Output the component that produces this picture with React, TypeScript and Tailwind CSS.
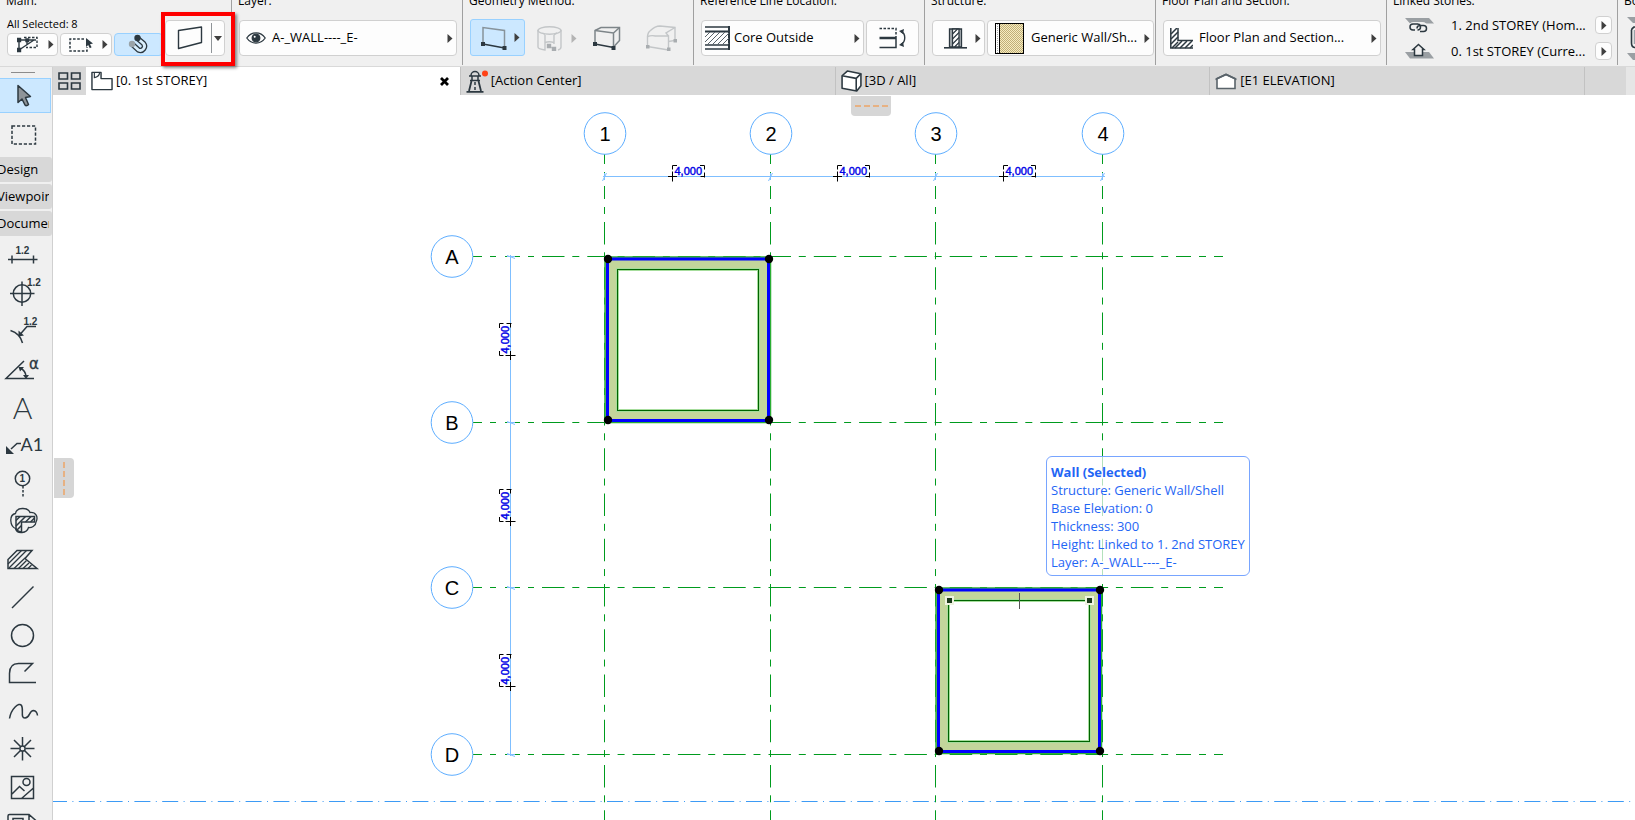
import React, { useState } from "react";

const INK = "#2c3840";

/* ---------- shared bits ---------- */

const Caret: React.FC<{ color?: string }> = ({ color = "#3f3f3f" }) => (
  <svg width="6" height="9" viewBox="0 0 6 9" className="shrink-0" aria-hidden="true">
    <path d="M0.5 0v9L5.5 4.5z" fill={color} />
  </svg>
);

const boxed = "flex shrink-0 items-center rounded border border-[#d0d0d0] bg-[#fdfdfd]";

const Section: React.FC<{ title: string; wide?: boolean; children: React.ReactNode }> = ({
  title,
  wide,
  children,
}) => (
  <section
    className={`flex h-[65px] shrink-0 flex-col overflow-hidden border-r border-[#a0a0a0] ${
      wide ? "w-[232px]" : "w-[231px]"
    }`}
  >
    <h2 className="-mt-[7px] pl-[6px] text-[12px] leading-4 whitespace-nowrap">{title}</h2>
    <div className="flex h-[47px] items-end gap-[2px] pl-[7px] pr-[5px]">{children}</div>
  </section>
);

/* ---------- info box icons ---------- */

const GroupIcon = () => (
  <svg width="22" height="17" viewBox="0 0 22 17" fill="none" stroke={INK} strokeWidth="1.4">
    <path d="M7 1.5h13v10H9" strokeDasharray="2.5 1.5" />
    <path d="M2 4h17M2 4v10L17 4M10 9V5" />
    <path d="M0.5 2.5h3v3h-3zM0.5 12.5h3v3h-3zM9 3h2.5v2.5H9z" fill={INK} />
  </svg>
);

const SelectArrowIcon = () => (
  <svg width="25" height="16" viewBox="0 0 25 16" fill="none">
    <path d="M15 2H1v12h17v-4" stroke={INK} strokeWidth="1.5" strokeDasharray="2.6 1.6" />
    <path d="M17 1v9l2.2-2 1.6 3.2 1.8-1-1.6-3L24 6.5z" fill={INK} />
  </svg>
);

const MagnetIcon = () => (
  <svg width="22" height="21" viewBox="0 0 22 21" fill="none">
    <path d="M9.7 4.5L15.5 9.5A4.2 4.2 0 0 1 10.500 16L4.500 10.500" stroke={INK} strokeWidth="5.400" />
    <path d="M9.7 4.5L15.5 9.5A4.2 4.2 0 0 1 10.500 16L4.500 10.500" stroke="#d9eefc" strokeWidth="2.800" />
    <circle cx="9.500" cy="4" r="3.200" fill={INK} />
    <circle cx="4" cy="10" r="3.200" fill="#9aa3a8" />
  </svg>
);

const WallIcon = () => (
  <svg width="26" height="24" viewBox="0 0 26 24" fill="none">
    <path d="M1.5 4.5L24.5 1v15.5L1.5 22.5z" stroke={INK} strokeWidth="1.4" strokeLinejoin="round" />
  </svg>
);

const EyeIcon = () => (
  <svg width="20" height="12" viewBox="0 0 20 12" fill="none" stroke={INK} strokeWidth="1.3">
    <path d="M0.8 6C5.5-0.8 14.5-0.8 19.2 6C14.5 12.8 5.5 12.8 0.8 6z" />
    <circle cx="10" cy="6" r="3.8" fill={INK} />
    <circle cx="8.7" cy="4.8" r="1" fill="#fff" stroke="none" />
  </svg>
);

const StraightIcon = () => (
  <svg width="26" height="24" viewBox="0 0 26 24" fill="none">
    <path d="M2 18V1.5L23.5 4.5V22" stroke="#87939b" strokeWidth="1.5" />
    <path d="M2 18l21.5 4" stroke={INK} strokeWidth="1.5" />
    <path d="M0 16h4v4H0zM21.5 20h4v4h-4z" fill={INK} />
  </svg>
);

const CurvedIcon = () => (
  <svg width="25" height="25" viewBox="0 0 25 25" fill="none" stroke="#c3c6c8" strokeWidth="1.4">
    <path d="M1 4v17c0 1.5 3 2.5 7 3V9M24 4v17c0 1.500-1 2.500-3 3M17 9v9" />
    <path d="M8 8.500L5.500 7M17 8.500l3-1.500M8 16.500q4-1.500 9 0" />
    <ellipse cx="12.5" cy="4.5" rx="11.5" ry="3.7" />
    <path d="M12 20l5 3" />
    <path d="M10.500 18.500h3v3h-3zM15.500 21.500h3v3h-3z" fill="#a9adb0" stroke="#a9adb0" />
  </svg>
);

const TrapezoidIcon = () => (
  <svg width="28" height="25" viewBox="0 0 28 25" fill="none" stroke="#7d8589" strokeWidth="1.5">
    <path d="M2 18V4.5L8 1.5h18.5v13L20.5 21" />
    <path d="M2 4.5l18.5 2.5 6-5.5M20.5 7v14" />
    <path d="M2 18l18.5 3.5" stroke={INK} />
    <path d="M0 16h4v4H0zM18.5 20h4v4h-4z" fill={INK} stroke="none" />
  </svg>
);

const PolyIcon = () => (
  <svg width="32" height="28" viewBox="0 0 32 28" fill="none" stroke="#c3c6c8" strokeWidth="1.4">
    <path d="M2.5 22V12Q3 8 5.500 6.500Q10 2 15 2l15 1.500v13l-6.500 1" />
    <path d="M2.5 12.500q4-1.500 8-0.500h13V26M23.500 12L21 9l9-5.500" />
    <path d="M2.5 22.5L23.5 26" />
    <path d="M1 21h3.5v3.5H1zM22 23.5h3.5V27H22zM28.5 15H32v3.5h-3.5z" fill="#a9adb0" stroke="none" />
  </svg>
);

const CoreIcon = () => (
  <svg width="25" height="24" viewBox="0 0 25 24" fill="none" stroke={INK}>
    <path d="M0 1h24M0 23h24" strokeWidth="1.5" />
    <path d="M0 5.5h24.5M24 0v24" strokeWidth="2" />
    <path d="M0 19h24.5" strokeWidth="1.5" />
    <path
      d="M0 11l5-5M0 16l10-10M2 19L15 6M7 19L20 6M12 19L24 7M17 19l7-7M22 19l2-2"
      strokeWidth="1"
      stroke="#59636a"
    />
  </svg>
);

const FlipIcon = () => (
  <svg width="28" height="22" viewBox="0 0 28 22" fill="none" stroke={INK}>
    <path d="M0.5 1.5H17V10" strokeWidth="1.5" strokeDasharray="2.5 1.5" />
    <path d="M0.5 11H17" strokeWidth="2.5" />
    <path d="M17 10v10.5H0.5" strokeWidth="1.5" />
    <path d="M22 4.5c5 2 5 10 0 13" strokeWidth="1.4" />
    <path d="M20 4l5-2-1 5zM20 18l5 2-1-5z" fill={INK} stroke="none" />
  </svg>
);

const StructureIcon = () => (
  <svg width="23" height="21" viewBox="0 0 23 21" fill="none" stroke={INK} strokeWidth="1.3">
    <path d="M5.5 1h12v18h-12z" fill="#aeb4b7" />
    <path d="M8.5 1h6.5v18H8.5z" fill="#fff" />
    <path d="M8.5 6l5-5M8.5 11l6.5-6.5M8.5 16l6.5-6.5M10.5 19l4.5-4.5" strokeWidth="1.1" />
    <path d="M0 19.8h23" strokeWidth="1.6" />
  </svg>
);

const SwatchIcon = () => (
  <svg width="29" height="31" viewBox="0 0 29 31" className="shrink-0">
    <defs>
      <pattern id="sand" width="2" height="2" patternUnits="userSpaceOnUse">
        <rect width="2" height="2" fill="#f7ecc0" />
        <rect width="1" height="1" fill="#bfae78" />
        <rect x="1" y="1" width="1" height="1" fill="#bfae78" />
      </pattern>
    </defs>
    <rect x="0.5" y="0.5" width="28" height="30" fill="#fff" stroke="#000" />
    <path d="M2.5 1v29" stroke="#aaa" strokeDasharray="1 1" />
    <rect x="4.5" y="0.5" width="24" height="30" fill="url(#sand)" stroke="#000" />
  </svg>
);

const PlanSectionIcon = () => (
  <svg width="23" height="21" viewBox="0 0 23 21" fill="none" stroke={INK}>
    <path d="M0.8 0v20H23M8 0v12.5h15" strokeWidth="1.5" />
    <path
      d="M1 6l6-6M1 11l7-7M1 16l7-7M2 20l6-6M5 20l7-7M10 20l7-7M15 20l7-7M20 20l3-3"
      strokeWidth="1.5"
    />
  </svg>
);

const LinkedUpIcon = () => (
  <svg width="30" height="15" viewBox="0 0 30 15" fill="none" className="shrink-0">
    <path d="M0 0h24l5 5.5H5z" fill="#9a9fa3" />
    <rect x="3.5" y="4" width="19" height="10.5" rx="5" fill="#f0f0f0" />
    <path
      d="M13 6H8a3 3 0 0 0 0 6h2M12 10.5a3 3 0 0 1 3-3h3.5a3 3 0 0 1 0 6H15M11 6h1.5a3 3 0 0 1 0 6"
      stroke={INK}
      strokeWidth="1.5"
    />
  </svg>
);

const HomeStoreyIcon = () => (
  <svg width="30" height="16" viewBox="0 0 30 16" fill="none" className="shrink-0">
    <path d="M0 9h24l5 6.5H5z" fill="#9a9fa3" />
    <path d="M13.5 1.5l5.5 5h-1.5v6h-8v-6H8z" fill="#f0f0f0" stroke={INK} strokeWidth="1.5" />
  </svg>
);

/* ---------- tab icons ---------- */

const FloorTabIcon = () => (
  <svg width="22" height="20" viewBox="0 0 23 20" fill="none" stroke={INK} strokeWidth="1.5">
    <path d="M1 1h9.5v6.5H22V19H1z" fill="#fff" strokeLinejoin="round" />
    <path d="M3.5 1.5v5q5-1 5.5-5" strokeWidth="1.2" />
  </svg>
);

const LighthouseIcon = () => (
  <svg width="22" height="23" viewBox="0 0 22 23" fill="none" stroke={INK} strokeWidth="1.5">
    <path d="M5 5.5a4 4 0 0 1 8 0M3 6h12M6 6v4M12 6v4M4 10.5h10" />
    <path d="M5.5 11L3 21M12.5 11L15 21M0.5 21.8h17" strokeWidth="1.8" />
    <path d="M9 12v9" strokeDasharray="3 2" />
    <circle cx="19" cy="3.5" r="3" fill="#ff4216" stroke="none" />
  </svg>
);

const CubeTabIcon = () => (
  <svg width="21" height="22" viewBox="0 0 20 21" fill="#fff" stroke={INK} strokeWidth="1.5" strokeLinejoin="round">
    <path d="M1 5.5L6 1l13 2.5V15l-4 5-14-2.5z" />
    <path d="M1 5.5L14.5 8 19 3.5M14.5 8v12" />
  </svg>
);

const ElevationTabIcon = () => (
  <svg width="22" height="17" viewBox="0 0 22 17" fill="none">
    <path d="M2 5.5V15.5h18V5.5L11 1.5z" fill="#fff" stroke="#59636a" strokeWidth="1.6" />
    <path d="M0.5 6.5L11 1.5l10.5 5" stroke="#59636a" strokeWidth="1.6" />
  </svg>
);

const tabs = [
  { label: "[0. 1st STOREY]", icon: FloorTabIcon },
  { label: "[Action Center]", icon: LighthouseIcon },
  { label: "[3D / All]", icon: CubeTabIcon },
  { label: "[E1 ELEVATION]", icon: ElevationTabIcon },
];

/* ---------- toolbox ---------- */

const digits = {
  fontFamily: "Liberation Sans, Arial, sans-serif",
  fontWeight: 700,
  fontSize: 10,
  fill: INK,
  stroke: "none",
};

const thin = { fontFamily: "Lato, sans-serif", fontWeight: 400, fill: INK, stroke: "none" };

const tools: { name: string; art: React.ReactNode }[] = [
  {
    name: "Dimension",
    art: (
      <>
        <path d="M8 23.5h29.5M12 19.5v8M33.5 19.5v8" />
        <text x="15.5" y="17.5" {...digits}>1.2</text>
      </>
    ),
  },
  {
    name: "Level Dimension",
    art: (
      <>
        <circle cx="22" cy="19.5" r="8.7" />
        <path d="M10 19.5h24.5M22 7.5V32" />
        <text x="27" y="11.5" {...digits}>1.2</text>
      </>
    ),
  },
  {
    name: "Radial Dimension",
    art: (
      <>
        <path d="M10.5 18.5q9.5 3 12 12.5M20 22.5l7-8h9" />
        <path d="M18.5 24.500v-6l5.500 5z" fill={INK} stroke="none" />
        <text x="23.5" y="12.5" {...digits}>1.2</text>
      </>
    ),
  },
  {
    name: "Angle Dimension",
    art: (
      <>
        <path d="M24 11L6 28.5h28M20.5 18q5 3 5.500 8" />
        <path d="M18.5 17h5.5l-4 4.500zM23 25h6l-3 4z" fill={INK} stroke="none" />
        <text x="29" y="18.5" fontSize="15" fontFamily="DejaVu Sans, sans-serif" fill={INK} stroke={INK} strokeWidth="0.3">α</text>
      </>
    ),
  },
  {
    name: "Text",
    art: <text x="22.5" y="31" textAnchor="middle" fontSize="30" {...thin} fontWeight="300">A</text>,
  },
  {
    name: "Label",
    art: (
      <>
        <path d="M11 23l6-5.500h4" />
        <path d="M6 20v8h8z" fill={INK} stroke="none" />
        <text x="20.5" y="25" fontSize="18" {...thin}>A1</text>
      </>
    ),
  },
  {
    name: "Grid Element",
    art: (
      <>
        <circle cx="22.5" cy="14.5" r="7.2" />
        <path d="M23 22v10.5" strokeDasharray="2.5 1.5" />
        <text x="19.5" y="18" {...digits}>1</text>
      </>
    ),
  },
  {
    name: "Change",
    art: (
      <>
        <path
          d="M15.5 11.500C16.500 5 28 5 30 10.500C36 10 38.500 15 36 20C36 24 31 26 28.500 25.500C27 31.500 17 32.500 15.500 26.500C10 24.500 8.500 13 15.500 11.500z"
          strokeWidth="1.3"
        />
        <path d="M16 14.500h18.500v5.500H21.500V30q-5.500-1-5.500-4z" fill="#f0f0f0" />
        <path d="M16 18.500l4-4M16 24l9.500-9.500M17 28l4.500-4.500M25.500 20l5.500-5.500M30.500 20l4-4" />
      </>
    ),
  },
  {
    name: "Fill",
    art: (
      <>
        <path d="M8 28.500v-9L17 10.500h15L25 18.500l12 10z" />
        <path d="M8 24l13.500-13.500M9 28L26.500 10.500M14 28.500l11-10.500M18.500 28.500l8-8M23 28.500l6-5.500M28 28.500l3.500-3.500" strokeWidth="1.3" />
      </>
    ),
  },
  { name: "Line", art: <path d="M12 30L33.5 8.5" /> },
  { name: "Circle", art: <circle cx="22.5" cy="19.5" r="11" /> },
  { name: "Polyline", art: <path d="M36 28.5H9.5V19.5q0-10 9-10h14L24.5 17.5" /> },
  {
    name: "Spline",
    art: <path d="M9.5 26.5C11 17 19 9.5 21.5 13.5S20 26 25 26S29 18.5 33.5 18.5Q37 19 37.5 23.5" />,
  },
  {
    name: "Hotspot",
    art: (
      <>
        <path d="M10.5 18.5h9M25.5 18.5h9M22.5 7v9M22.5 21v9.5M14 10l6.5 6.5M24.5 20.5L31 27M31 10l-6.5 6.5M20.5 20.5L14 27" />
        <circle cx="22.5" cy="18.5" r="2.6" />
      </>
    ),
  },
  {
    name: "Figure",
    art: (
      <>
        <path d="M11.5 8.5h22v22h-22zM12 26l7.5-7.5 5 4.5M21.5 30.5l12-10.5" />
        <circle cx="26.5" cy="14" r="3.5" />
      </>
    ),
  },
  {
    name: "Drawing",
    art: <path d="M8 38V10q0-1.5 1.5-1.5H29l8 7V38M13 38V12.5h10V38M17 16.5h3M29 9v7h7" />,
  },
];

const Toolbox: React.FC<{ tool: string; setTool: (t: string) => void }> = ({ tool, setTool }) => (
  <nav className="flex w-[53px] shrink-0 flex-col overflow-hidden border-r border-[#d0d0d0] bg-[#f0f0f0]">
    <div className="ml-[11px] mt-[5px] h-px w-6 shrink-0 bg-[#8c8c8c]" />
    <button
      aria-label="Arrow"
      onClick={() => setTool("Arrow")}
      className={`mt-[5px] flex h-[35px] w-[51px] shrink-0 items-center border-y border-r ${
        tool === "Arrow" ? "border-[#99d1ff] bg-[#cce8ff]" : "border-transparent"
      }`}
    >
      <svg width="15" height="23" viewBox="0 0 15 23" className="ml-[17px]">
        <path
          d="M1 1.5v17l4-3.5 3 6q1.5 1.5 3.5-0.5L8.5 13.5l5-1z"
          fill="#8e9499"
          stroke={INK}
          strokeWidth="1.5"
          strokeLinejoin="round"
        />
      </svg>
    </button>
    <button aria-label="Marquee" onClick={() => setTool("Marquee")} className="flex h-11 shrink-0 items-center">
      <svg width="26" height="20" viewBox="0 0 26 20" className="ml-[11px]" fill="none">
        <path d="M1 1h23.5v18H1z" stroke={INK} strokeWidth="1.5" strokeDasharray="3.2 1.8" />
      </svg>
    </button>
    <div className="flex shrink-0 flex-col gap-[2px]">
      {["Design", "Viewpoint", "Document"].map((group) => (
        <button key={group} className="h-[25px] rounded-r-[3px] bg-[#d8d8d8] pr-[3px] text-left">
          <span className="block overflow-hidden whitespace-nowrap">
            <span className="-ml-[3px]">{group}</span>
          </span>
        </button>
      ))}
    </div>
    {tools.map((t) => (
      <button key={t.name} aria-label={t.name} onClick={() => setTool(t.name)} className="h-[38px] shrink-0">
        <svg width="52" height="38" viewBox="0 0 52 38" fill="none" stroke={INK} strokeWidth="1.5">
          {t.art}
        </svg>
      </button>
    ))}
  </nav>
);

/* ---------- floor plan ---------- */

const GRID = "#009b1e";
const columns = [
  { name: "1", x: 604.5 },
  { name: "2", x: 770.5 },
  { name: "3", x: 935.5 },
  { name: "4", x: 1102.5 },
];
const rows = [
  { name: "A", y: 256.5 },
  { name: "B", y: 422.5 },
  { name: "C", y: 587.5 },
  { name: "D", y: 754.5 },
];

const Bubble: React.FC<{ x: number; y: number; name: string }> = ({ x, y, name }) => (
  <g>
    <circle cx={x} cy={y} r="20.8" fill="#fff" stroke="#5cadff" />
    <text x={x} y={y + 7} textAnchor="middle" fontSize="20" fill="#000">{name}</text>
  </g>
);

const DimensionText = () => (
  <g>
    <text x="2" y="-1.5" fontSize="11" fill="#0000e6" stroke="#0000e6" strokeWidth="0.4">4,000</text>
    <path
      d="M-4.5 0h9M0-5v10M0-7v-4h4.5M27.5-11H32v4M32-4V1M28 0h4"
      stroke="#000"
      fill="none"
    />
  </g>
);

const Wall: React.FC<{ x: number; y: number; hovered?: boolean }> = ({ x, y, hovered }) => (
  <g transform={`translate(${x} ${y})`} fill="none">
    <path d="M1 1h165.5v165.5H1zM13 13v141h141V13z" fill="#c3d69b" fillRule="evenodd" />
    <rect x="1" y="1" width="165.5" height="165.5" stroke="#2cae35" strokeWidth="1.5" />
    <rect x="13.5" y="13.5" width="141" height="141" stroke="#a6dd9c" strokeWidth="3" />
    <rect x="13.5" y="13.5" width="141" height="141" stroke="#006400" />
    <rect x="3.5" y="3" width="161" height="161.5" stroke="#0000ff" strokeWidth="3" />
    {[4, 165].map((cx) => [3, 164].map((cy) => <circle key={`${cx}-${cy}`} cx={cx} cy={cy} r="4.2" fill="#000" />))}
    {hovered && (
      <>
        <path d="M84.5 6v16" stroke="#555" />
        {[14, 154].map((cx) => (
          <rect key={cx} x={cx - 3} y="10" width="7" height="7" fill="#1c3a1c" stroke="#eef3e0" strokeWidth="2" />
        ))}
      </>
    )}
  </g>
);

const FloorPlan = () => (
  <svg
    className="block h-full w-full"
    fontFamily="Liberation Sans, Arial, sans-serif"
    role="img"
    aria-label="1st storey floor plan"
  >
    {/* model coordinates start at the window corner */}
    <g transform="translate(-53 -95)">
      <path d="M51 801.5H4000" stroke="#3d9bf5" strokeDasharray="16 5.4 1 5.4" />

      <g stroke={GRID} fill="none">
        {columns.map((c) => (
          <g key={c.name}>
            <path d={`M${c.x} 154v10M${c.x} 172v5M${c.x} 186v13M${c.x} 207v7`} />
            <path d={`M${c.x} 222V4000`} strokeDasharray="22.5 7.8 7 7.95" />
          </g>
        ))}
        {rows.map((r) => (
          <g key={r.name}>
            <path d={`M473 ${r.y}h9M490 ${r.y}h6M505 ${r.y}h15M528 ${r.y}h6`} />
            <path d={`M542 ${r.y}H1169`} strokeDasharray="22.5 7.8 7 8" />
            <path d={`M1176 ${r.y}h15M1199 ${r.y}h7M1214 ${r.y}h9`} />
          </g>
        ))}
      </g>

      <g stroke="#7fbfff" fill="none">
        <path d="M603 176.5H1105M510.5 255V756" />
        {columns.map((c) => (
          <path key={c.name} d={`M${c.x - 2} 181l4-8M${c.x} 173v7`} />
        ))}
        {rows.map((r) => (
          <path key={r.name} d={`M507 ${r.y - 1}l8 3M507 ${r.y}h8`} />
        ))}
      </g>

      {columns.map((c) => (
        <Bubble key={c.name} x={c.x + 0.5} y={133.5} name={c.name} />
      ))}
      {rows.map((r) => (
        <Bubble key={r.name} x={452} y={r.y} name={r.name} />
      ))}

      <Wall x={604} y={256} />
      <Wall x={935} y={587} hovered />

      {[672.5, 837.5, 1003.5].map((x) => (
        <g key={x} transform={`translate(${x} 176.5)`}>
          <DimensionText />
        </g>
      ))}
      {[355.5, 521.5, 686.5].map((y) => (
        <g key={y} transform={`translate(510.5 ${y}) rotate(-90)`}>
          <DimensionText />
        </g>
      ))}
    </g>
  </svg>
);

const wallInfo = [
  "Structure: Generic Wall/Shell",
  "Base Elevation: 0",
  "Thickness: 300",
  "Height: Linked to 1. 2nd STOREY",
  "Layer: A-_WALL----_E-",
];

/* ---------- page ---------- */

const App: React.FC = () => {
  const [tool, setTool] = useState("Arrow");
  const [activeTab, setActiveTab] = useState(0);

  return (
    <div className="flex h-screen flex-col overflow-hidden bg-white font-['Open_Sans','Noto_Sans',sans-serif] text-[13px] text-black">
      {/* Info box */}
      <header className="flex h-[67px] shrink-0 overflow-hidden border-b border-[#d9d9d9] bg-[#f0f0f0]">
        <Section title="Main:" wide>
          <div className="flex flex-col gap-px">
            <p className="text-[11px] leading-4">All Selected: 8</p>
            <div className="flex gap-[2px]">
              <button aria-label="Selected elements" className={`${boxed} h-[23px] w-[51px] justify-between pl-[9px] pr-[3px]`}>
                <GroupIcon />
                <Caret />
              </button>
              <button aria-label="Selection method" className={`${boxed} h-[23px] w-[52px] justify-between pl-2 pr-[3px]`}>
                <SelectArrowIcon />
                <Caret />
              </button>
              <button
                aria-label="Magnet"
                className="flex h-[23px] w-[49px] items-center justify-center rounded border border-[#99d1ff] bg-[#cce8ff]"
              >
                <MagnetIcon />
              </button>
            </div>
          </div>
          <button aria-label="Wall settings" className={`${boxed} h-9 w-[60px] justify-between pl-[11px] pr-[2px]`}>
            <WallIcon />
            <span className="flex h-[30px] items-center border-l border-[#8f9498] pl-[2px]">
              <svg width="8" height="5" viewBox="0 0 8 5" aria-hidden="true">
                <path d="M0 0h8L4 5z" fill="#3f3f3f" />
              </svg>
            </span>
          </button>
        </Section>

        <Section title="Layer:">
          <button className={`${boxed} h-9 flex-1 gap-[6px] pl-[6px] pr-[3px]`}>
            <EyeIcon />
            <span className="flex-1 text-left">A-_WALL----_E-</span>
            <Caret />
          </button>
        </Section>

        <Section title="Geometry Method:">
          <button
            aria-label="Straight"
            className="flex h-[37px] w-[55px] shrink-0 items-center justify-between rounded-[3px] border border-[#99d1ff] bg-[#cce8ff] pl-[10px] pr-1"
          >
            <StraightIcon />
            <Caret />
          </button>
          <button aria-label="Curved" className="flex h-9 w-[53px] shrink-0 items-center justify-between pl-[10px] pr-[3px]">
            <CurvedIcon />
            <Caret color="#b4b4b4" />
          </button>
          <button aria-label="Trapezoid" className="flex h-9 w-[50px] shrink-0 items-center justify-center">
            <TrapezoidIcon />
          </button>
          <button aria-label="Polygonal" className="flex h-9 flex-1 items-center justify-center">
            <PolyIcon />
          </button>
        </Section>

        <Section title="Reference Line Location:">
          <button className={`${boxed} h-9 flex-1 gap-1 pl-[3px] pr-[3px]`}>
            <CoreIcon />
            <span className="flex-1 text-left">Core Outside</span>
            <Caret />
          </button>
          <button aria-label="Flip" className={`${boxed} h-9 w-[53px] justify-center`}>
            <FlipIcon />
          </button>
        </Section>

        <Section title="Structure:">
          <button aria-label="Basic structure" className={`${boxed} h-9 w-[53px] justify-between pl-[11px] pr-[3px]`}>
            <StructureIcon />
            <Caret />
          </button>
          <button className={`${boxed} h-9 flex-1 gap-[7px] pl-[7px] pr-[3px]`}>
            <SwatchIcon />
            <span className="flex-1 text-left whitespace-nowrap">Generic Wall/Sh...</span>
            <Caret />
          </button>
        </Section>

        <Section title="Floor Plan and Section:">
          <button className={`${boxed} h-9 flex-1 gap-[6px] pl-[6px] pr-[3px]`}>
            <PlanSectionIcon />
            <span className="flex-1 text-left">Floor Plan and Section...</span>
            <Caret />
          </button>
        </Section>

        <Section title="Linked Stories:">
          <div className="-mb-1 flex flex-1 flex-col gap-2 pl-[11px]">
            <div className="flex items-center">
              <LinkedUpIcon />
              <span className="flex-1 pl-4 leading-[18px] whitespace-nowrap">1. 2nd STOREY (Hom...</span>
              <button aria-label="Change top storey" className={`${boxed} h-[18px] w-[17px] justify-center`}>
                <Caret />
              </button>
            </div>
            <div className="flex items-center">
              <HomeStoreyIcon />
              <span className="flex-1 pl-4 leading-[18px] whitespace-nowrap">0. 1st STOREY (Curre...</span>
              <button aria-label="Change home storey" className={`${boxed} h-[18px] w-[17px] justify-center`}>
                <Caret />
              </button>
            </div>
          </div>
        </Section>

        <Section title="Bottom and Top:">
          <svg width="50" height="44" viewBox="0 0 50 44" className="-mb-1 ml-[2px] shrink-0" fill="none">
            <path d="M0 1h42l5 6H6z" fill="#9a9fa3" />
            <path d="M0 37h42l5 7H6z" fill="#9a9fa3" />
            <path d="M10 11H7q-3 2-2.500 4v12q0 4 3 4.500H10" stroke={INK} strokeWidth="1.6" />
            <path d="M7.500 14v14" stroke="#9aa3a8" strokeWidth="1.5" />
          </svg>
        </Section>
      </header>

      {/* highlight round the wall settings button */}
      <div className="pointer-events-none absolute left-[161px] top-3 z-10 h-[54px] w-[74px] border-4 border-[#ff0000] shadow-[2px_2px_3px_rgba(0,0,0,0.45)]" />

      <div className="flex min-h-0 flex-1">
        <Toolbox tool={tool} setTool={setTool} />

        <main className="flex min-w-0 flex-1 flex-col">
          {/* Tab bar */}
          <div className="flex h-7 shrink-0 bg-[#d8d8d8]">
            <button aria-label="Tab overview" className="flex w-[33px] items-center justify-center">
              <svg width="23" height="18" viewBox="0 0 23 18" fill="none" stroke={INK} strokeWidth="1.6">
                <path d="M1 1h8.5v6H1zM13.5 1H22v6h-8.5zM1 11h8.5v6H1zM13.5 11H22v6h-8.5z" />
              </svg>
            </button>
            {tabs.map((tab, i) => {
              const Icon = tab.icon;
              const active = i === activeTab;
              return (
                <div
                  key={tab.label}
                  className={`flex flex-1 items-center border-r border-[#c2c2c2] pl-[5px] ${active ? "bg-white" : ""}`}
                >
                  <button onClick={() => setActiveTab(i)} className="flex flex-1 items-center gap-[3px] text-left">
                    <Icon />
                    <span>{tab.label}</span>
                  </button>
                  {active && (
                    <button aria-label="Close tab" className="px-[11px]">
                      <svg width="9" height="9" viewBox="0 0 9 9" stroke="#000" strokeWidth="2.8">
                        <path d="M1 1l7 7M8 1L1 8" />
                      </svg>
                    </button>
                  )}
                </div>
              );
            })}
            <div className="w-[41px]" />
            <div className="w-[9px] bg-[#e6e6e6]" />
          </div>

          {/* Canvas */}
          <div className="relative min-h-0 flex-1 overflow-hidden bg-white">
            <FloorPlan />
            <div className="absolute left-[798px] top-px flex h-5 w-10 items-center justify-center rounded-b bg-[#d6d6d6]">
              <svg width="34" height="2" viewBox="0 0 34 2" aria-hidden="true">
                <path d="M1 1h34" stroke="#eda567" strokeWidth="1.5" strokeDasharray="6 3" />
              </svg>
            </div>
            <div className="absolute left-px top-[363px] flex h-10 w-5 items-center justify-center rounded-r bg-[#d6d6d6]">
              <svg width="2" height="34" viewBox="0 0 2 34" aria-hidden="true">
                <path d="M1 1v34" stroke="#eda567" strokeWidth="1.5" strokeDasharray="6 3" />
              </svg>
            </div>
            <div
              role="tooltip"
              className="absolute left-[993px] top-[361px] rounded-md border border-[#78a5ff] bg-white/70 px-1 pb-1 pt-[6px] leading-[18px] whitespace-nowrap text-[#1f66f5]"
            >
              <p className="font-bold">Wall (Selected)</p>
              {wallInfo.map((line) => (
                <p key={line}>{line}</p>
              ))}
            </div>
          </div>
        </main>
      </div>
    </div>
  );
};

export default App;
